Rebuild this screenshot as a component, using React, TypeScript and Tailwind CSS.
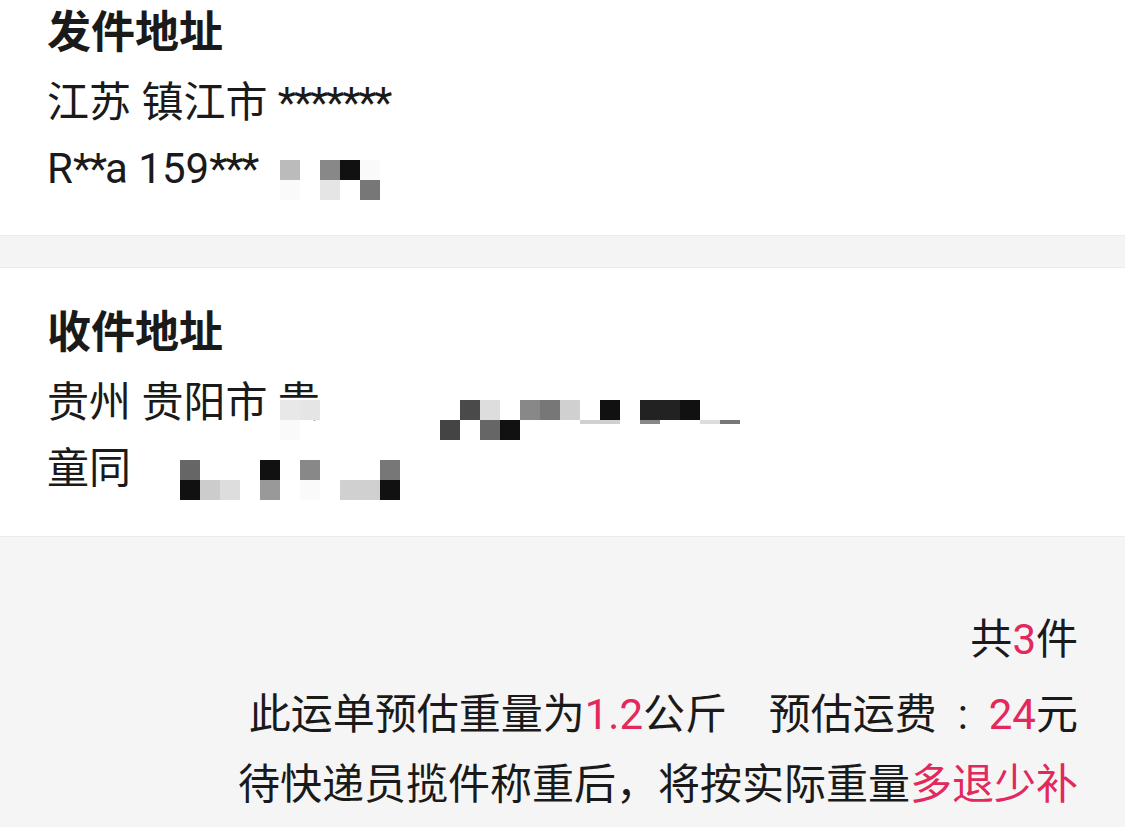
import React from "react";

type Cells = string[][];

function Mosaic({ cells, className }: { cells: Cells; className: string }) {
    return (
        <div className={"absolute flex flex-col " + className}>
            {cells.map((row, r) => (
                <div key={r} className="flex">
                    {row.map((c, i) => (
                        <div
                            key={i}
                            className="w-[20px] h-[20px]"
                            style={{ backgroundColor: c || "transparent" }}
                        />
                    ))}
                </div>
            ))}
        </div>
    );
}

function AddressCard({
    title,
    line1,
    line2,
    top,
    children,
}: {
    title: string;
    line1: React.ReactNode;
    line2: React.ReactNode;
    top: boolean;
    children?: React.ReactNode;
}) {
    return (
        <section
            className={
                "relative bg-white px-[47px] " +
                (top ? "pt-0 pb-[33px]" : "pt-[32px] pb-[34px]")
            }
        >
            <h2 className="text-[44px] font-bold leading-[66px] text-[#1a1a1a]">
                {title}
            </h2>
            <p className="mt-1 text-[42px] leading-[66px] whitespace-pre">
                {line1}
            </p>
            <p className="text-[42px] leading-[66px] whitespace-pre">{line2}</p>
            {children}
        </section>
    );
}

const red = "text-[#e2285c]";

export default function App() {
    return (
        <div
            className="min-h-[827px] bg-[#f5f5f5] text-[#1a1a1a]"
            style={{
                fontFamily:
                    'Roboto, "Noto Sans CJK SC", "Noto Sans", sans-serif',
            }}
        >
            <AddressCard
                top
                title="发件地址"
                line1={
                    <>
                        江苏 镇江市{" "}
                        <span className="tracking-[-2px]">*******</span>
                    </>
                }
                line2={
                    <>
                        R<span className="tracking-[-2px]">**</span>a 159
                        <span className="tracking-[-2px]">***</span>
                    </>
                }
            >
                <Mosaic
                    className="left-[280px] top-[160px]"
                    cells={[
                        ["#bbbbbb", "", "#888888", "#111111", "#fafafa"],
                        ["#fafafa", "", "#e5e5e5", "", "#777777"],
                    ]}
                />
            </AddressCard>

            <div className="h-[33px] bg-[#f4f4f4] border-y border-[#ececec]" />

            <AddressCard
                top={false}
                title="收件地址"
                line1="贵州 贵阳市 贵"
                line2="童同"
            >
                <Mosaic
                    className="left-[260px] top-[132px]"
                    cells={[
                        ["", "#e8e8e8", "#e5e5e5"],
                        ["", "#fafafa", ""],
                    ]}
                />
                <Mosaic
                    className="left-[440px] top-[132px]"
                    cells={[
                        [
                            "",
                            "#4a4a4a",
                            "#dddddd",
                            "",
                            "#888888",
                            "#777777",
                            "#d0d0d0",
                            "",
                            "#111111",
                            "",
                            "#222222",
                            "#222222",
                            "#111111",
                        ],
                        ["#444444", "", "#666666", "#111111"],
                    ]}
                />
                <div className="absolute left-[580px] top-[152px] flex">
                    <div className="w-[40px] h-[4px] bg-[#d0d0d0]" />
                    <div className="w-[20px] h-[4px]" />
                    <div className="w-[20px] h-[4px] bg-[#888888]" />
                    <div className="w-[40px] h-[4px]" />
                    <div className="w-[20px] h-[4px] bg-[#dddddd]" />
                    <div className="w-[20px] h-[4px] bg-[#777777]" />
                </div>
                <Mosaic
                    className="left-[180px] top-[192px]"
                    cells={[
                        ["#666666", "", "", "", "#111111", "", "#888888", "", "", "", "#777777"],
                        [
                            "#111111",
                            "#cccccc",
                            "#dddddd",
                            "",
                            "#999999",
                            "",
                            "#fafafa",
                            "",
                            "#d0d0d0",
                            "#d0d0d0",
                            "#111111",
                        ],
                    ]}
                />
            </AddressCard>

            <div className="border-t border-[#ececec] pt-[70px] pr-[47px] text-right text-[42px]">
                <p className="leading-[66px]">
                    共<span className={red}>3</span>件
                </p>
                <p className="mt-[9px] leading-[66px] whitespace-pre">
                    此运单预估重量为<span className={red}>1.2</span>
                    公斤{"    "}预估运费
                    <span className="inline-block w-[52px] text-center">:</span>
                    <span className={red}>24</span>元
                </p>
                <p className="mt-[4px] leading-[66px]">
                    待快递员揽件称重后，将按实际重量
                    <span className={red}>多退少补</span>
                </p>
            </div>
        </div>
    );
}
